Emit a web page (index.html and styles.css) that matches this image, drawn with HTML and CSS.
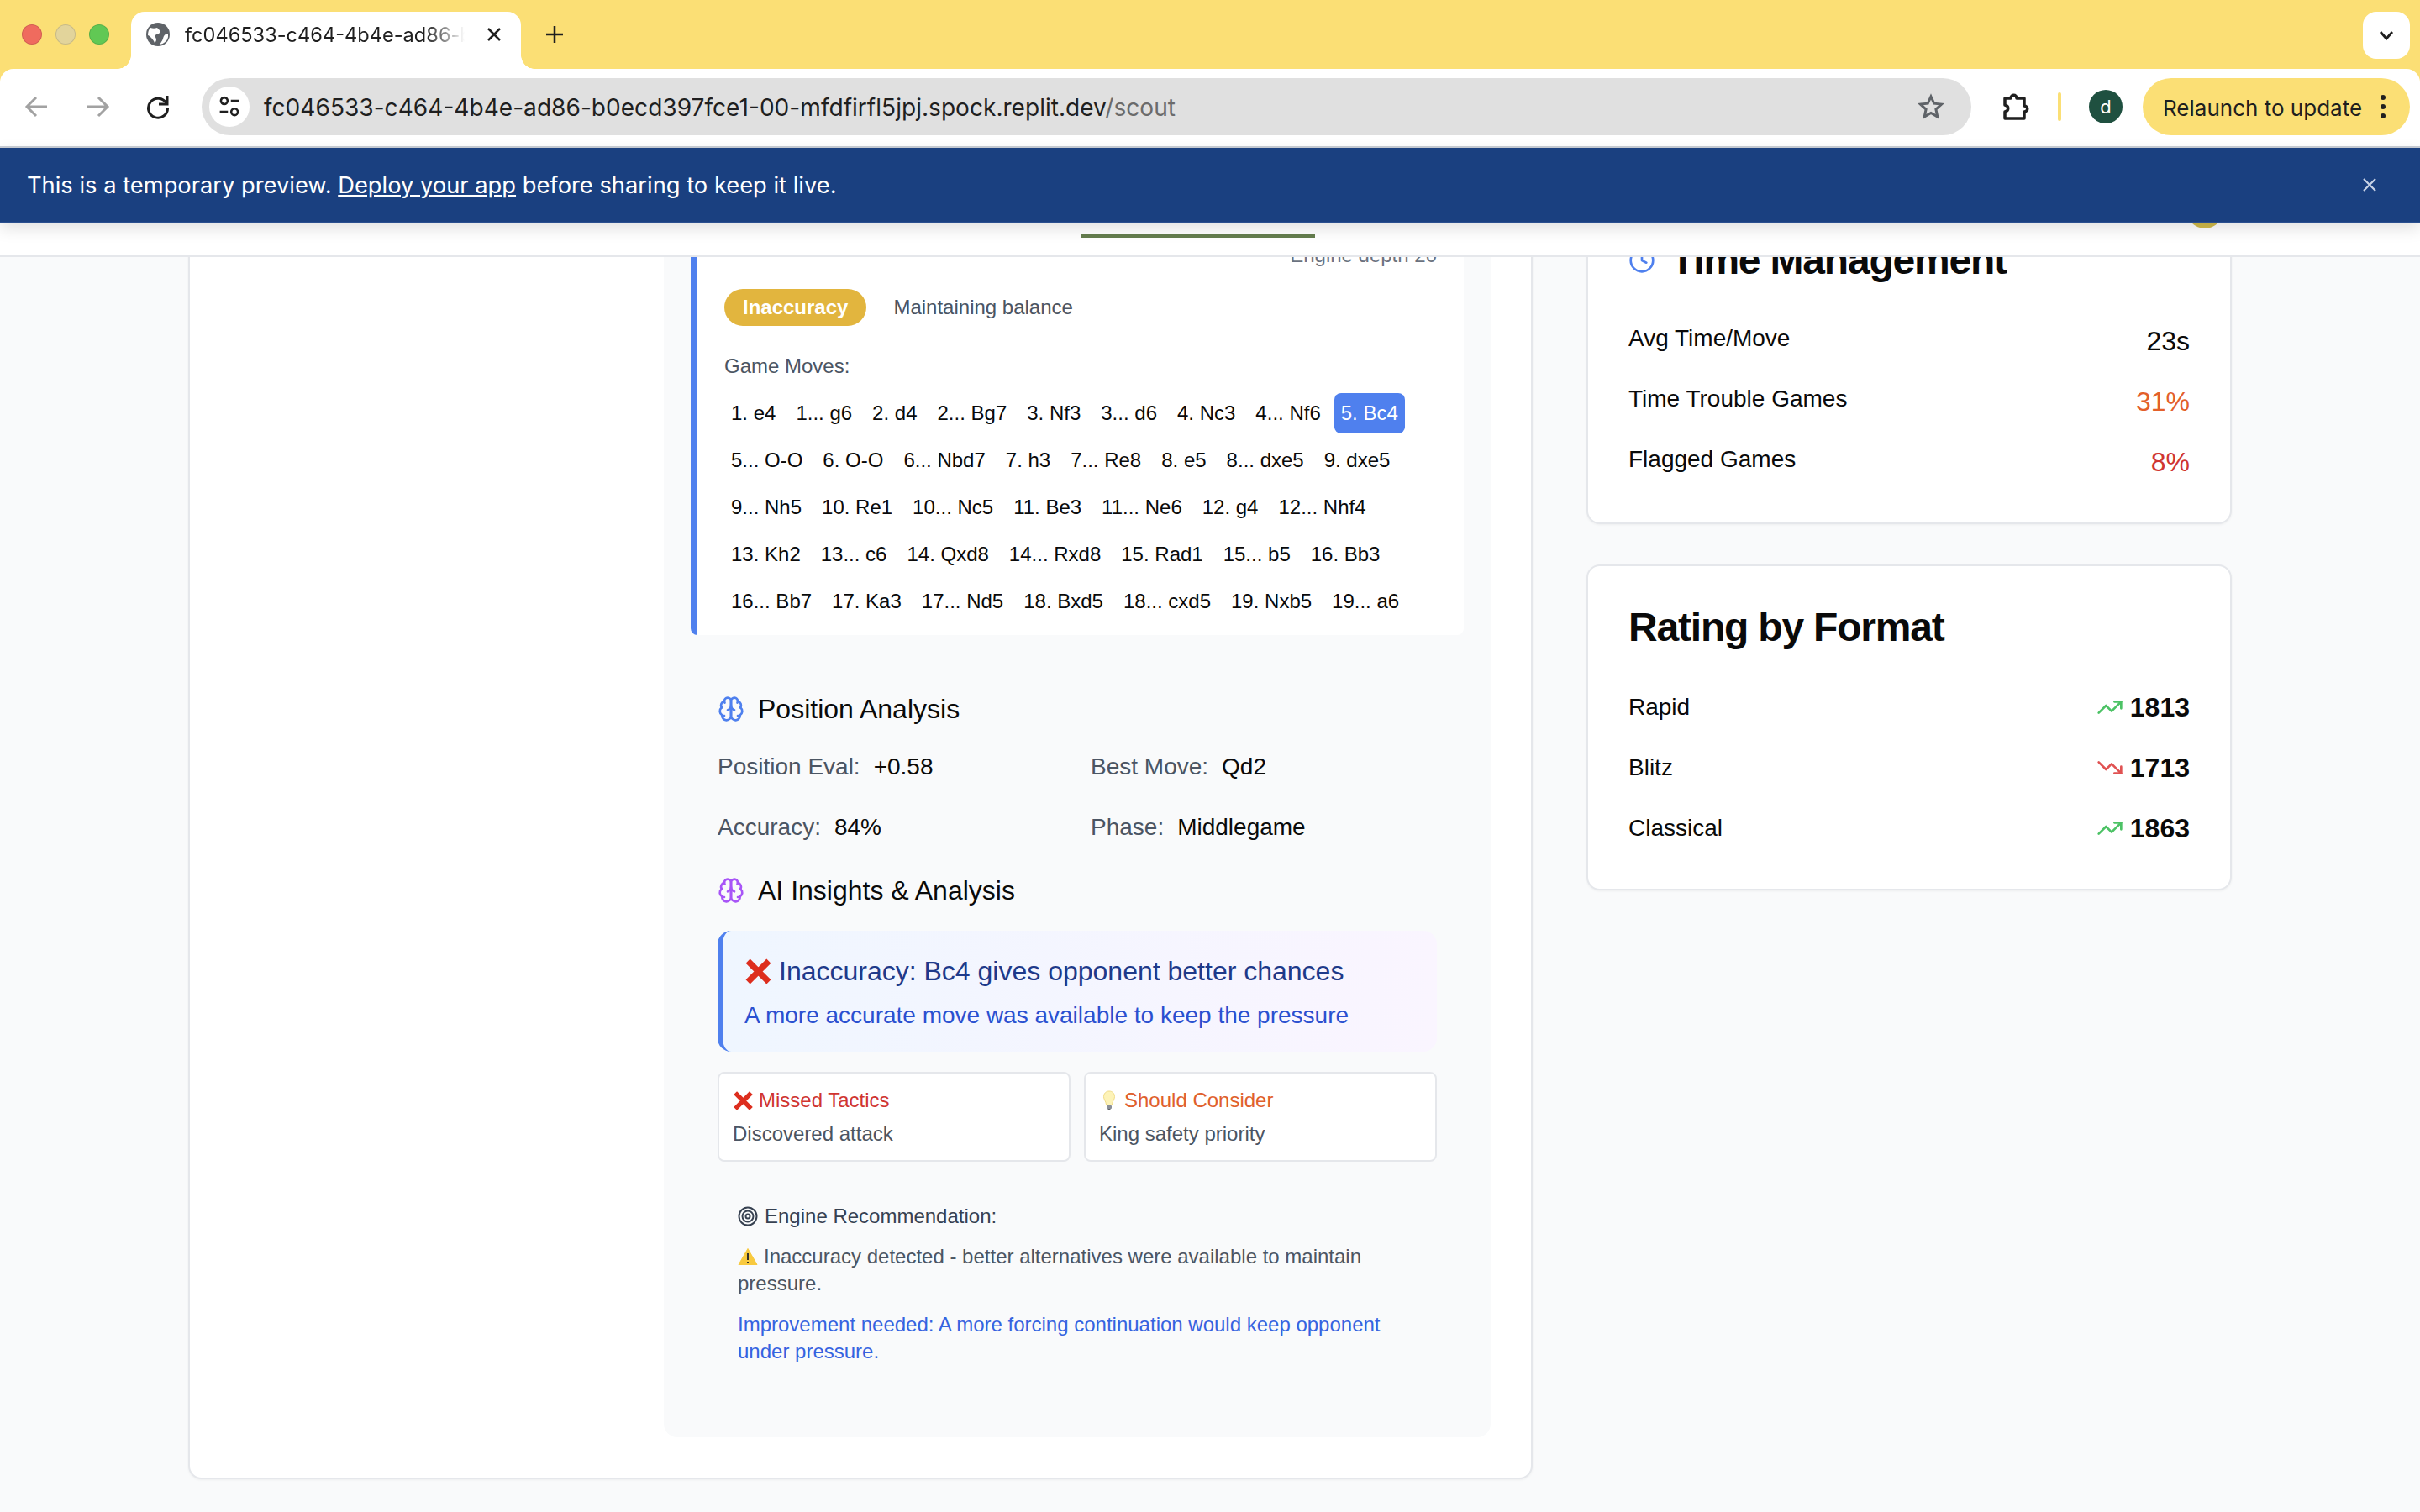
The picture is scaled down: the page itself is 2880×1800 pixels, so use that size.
FILE: index.html
```html
<!DOCTYPE html>
<html lang="en">
<head>
<meta charset="UTF-8" />
<meta name="viewport" content="width=device-width, initial-scale=1" />
<title>Scout</title>
<link rel="stylesheet" href="styles.css">
</head>
<body>
<svg class="defs" width="0" height="0" aria-hidden="true">
  <symbol id="brain" viewBox="0 0 24 24">
    <path d="M12 5a3 3 0 1 0-5.997.125 4 4 0 0 0-2.526 5.77 4 4 0 0 0 .556 6.588A4 4 0 1 0 12 18Z"/>
    <path d="M12 5a3 3 0 1 1 5.997.125 4 4 0 0 1 2.526 5.77 4 4 0 0 1-.556 6.588A4 4 0 1 1 12 18Z"/>
    <path d="M15 13a4.5 4.5 0 0 1-3-4 4.5 4.5 0 0 1-3 4"/>
    <path d="M17.599 6.5a3 3 0 0 0 .399-1.375"/>
    <path d="M6.003 5.125A3 3 0 0 0 6.401 6.5"/>
    <path d="M3.477 10.896a4 4 0 0 1 .585-.396"/>
    <path d="M19.938 10.5a4 4 0 0 1 .585.396"/>
    <path d="M6 18a4 4 0 0 1-1.967-.516"/>
    <path d="M19.967 17.484A4 4 0 0 1 18 18"/>
  </symbol>
  <symbol id="cross" viewBox="0 0 32 32">
    <path d="M4 4 28 28M28 4 4 28"/>
  </symbol>
  <symbol id="up" viewBox="0 0 24 24">
    <polyline points="22 7 13.5 15.5 8.5 10.5 2 17"/>
    <polyline points="16 7 22 7 22 13"/>
  </symbol>
  <symbol id="down" viewBox="0 0 24 24">
    <polyline points="22 17 13.5 8.5 8.5 13.5 2 7"/>
    <polyline points="16 17 22 17 22 11"/>
  </symbol>
</svg>

<div class="browser">
  <div class="tabstrip">
    <div class="lights">
      <span class="light light-red"></span>
      <span class="light light-idle"></span>
      <span class="light light-green"></span>
    </div>
    <div class="tab">
      <svg class="globe" viewBox="0 0 28 28">
        <circle cx="14" cy="14" r="14" fill="#5f6368"/>
        <path d="M5 6c3 1 5 1 8 0 2 2 4 3 3 6-1 2-4 1-5 3-1 2 1 3 1 5 0 2-1 3-2 4-1-3-3-5-5-7-1-1-2-2-3-2 0-4 1-7 3-9Z" fill="#fff"/>
        <path d="M26 13c-2 0-4 1-5 3-1 2-1 4-3 7l-2 3c5-1 9-4 10-9 0-1 0-3 0-4Z" fill="#fff"/>
      </svg>
      <span class="tab-title">fc046533-c464-4b4e-ad86-b0ecd397fce1</span>
      <svg class="tab-close" viewBox="0 0 20 20"><path d="M3 3 17 17M17 3 3 17"/></svg>
    </div>
    <svg class="new-tab" viewBox="0 0 24 24"><path d="M12 2V22M2 12H22"/></svg>
    <div class="tab-menu">
      <svg viewBox="0 0 20 20"><path d="M3 6 10 14 17 6"/></svg>
    </div>
  </div>

  <div class="toolbar">
    <svg class="nav-icon nav-off" viewBox="0 0 32 32"><path d="M28 16H5M15 5 4 16 15 27"/></svg>
    <svg class="nav-icon nav-off" viewBox="0 0 32 32"><path d="M4 16H27M17 5 28 16 17 27"/></svg>
    <svg class="nav-icon" viewBox="0 0 32 32"><path d="M26 12A11.5 11.5 0 1 0 27.500 17"/><path d="M27 3V13H17" /></svg>
    <div class="omnibox">
      <span class="site-icon">
        <svg viewBox="0 0 32 32"><circle cx="9" cy="8" r="4.500"/><path d="M18 8H29M3 23H14"/><circle cx="23" cy="23" r="4.500"/></svg>
      </span>
      <span class="url">fc046533-c464-4b4e-ad86-b0ecd397fce1-00-mfdfirfl5jpj.spock.replit.dev<span class="url-path">/scout</span></span>
      <svg class="star" viewBox="0 0 32 32"><path d="M16 4l3.700 8.200 8.900.9-6.700 6 1.900 8.800-7.800-4.500-7.800 4.500 1.900-8.800-6.700-6 8.900-.9Z"/></svg>
    </div>
    <svg class="puzzle" viewBox="0 0 36 36"><path d="M5 8h7c0-5 7-5 7 0h9v9c5 0 5 7 0 7v8H5v-8c5-1 5-7 0-8Z"/></svg>
    <span class="toolbar-sep"></span>
    <span class="profile">d</span>
    <div class="relaunch">
      <span class="relaunch-text">Relaunch to update</span>
      <span class="kebab"><i></i><i></i><i></i></span>
    </div>
  </div>

  <div class="banner">
    <span>This is a temporary preview. <a href="#">Deploy your app</a> before sharing to keep it live.</span>
    <svg class="banner-close" viewBox="0 0 20 20"><path d="M3 3 17 17M17 3 3 17"/></svg>
  </div>
</div>

<div class="site-header">
  <span class="nav-underline"></span>
  <span class="user-dot"></span>
</div>

<div class="scroller">
  <main class="main-card">
    <div class="side-space"></div>
    <section class="panel">
      <div class="move-card">
        <div class="depth">Engine depth 20</div>
        <div class="verdict">
          <span class="badge">Inaccuracy</span>
          <span class="verdict-note">Maintaining balance</span>
        </div>
        <div class="moves-label">Game Moves:</div>
        <div class="moves">
          <span class="move">1. e4</span><span class="move">1... g6</span><span class="move">2. d4</span><span class="move">2... Bg7</span><span class="move">3. Nf3</span><span class="move">3... d6</span><span class="move">4. Nc3</span><span class="move">4... Nf6</span><span class="move current">5. Bc4</span>
          <span class="move">5... O-O</span><span class="move">6. O-O</span><span class="move">6... Nbd7</span><span class="move">7. h3</span><span class="move">7... Re8</span><span class="move">8. e5</span><span class="move">8... dxe5</span><span class="move">9. dxe5</span>
          <span class="move">9... Nh5</span><span class="move">10. Re1</span><span class="move">10... Nc5</span><span class="move">11. Be3</span><span class="move">11... Ne6</span><span class="move">12. g4</span><span class="move">12... Nhf4</span>
          <span class="move">13. Kh2</span><span class="move">13... c6</span><span class="move">14. Qxd8</span><span class="move">14... Rxd8</span><span class="move">15. Rad1</span><span class="move">15... b5</span><span class="move">16. Bb3</span>
          <span class="move">16... Bb7</span><span class="move">17. Ka3</span><span class="move">17... Nd5</span><span class="move">18. Bxd5</span><span class="move">18... cxd5</span><span class="move">19. Nxb5</span><span class="move">19... a6</span>
        </div>
      </div>

      <div class="analysis">
        <h3 class="section-title">
          <svg class="lucide brain-blue"><use href="#brain"/></svg>
          Position Analysis
        </h3>
        <div class="facts">
          <div class="fact"><span class="fact-label">Position Eval:</span><span>+0.58</span></div>
          <div class="fact"><span class="fact-label">Best Move:</span><span>Qd2</span></div>
          <div class="fact"><span class="fact-label">Accuracy:</span><span>84%</span></div>
          <div class="fact"><span class="fact-label">Phase:</span><span>Middlegame</span></div>
        </div>

        <h3 class="section-title">
          <svg class="lucide brain-purple"><use href="#brain"/></svg>
          AI Insights &amp; Analysis
        </h3>
        <div class="insight">
          <div class="insight-head">
            <svg class="cross cross-big"><use href="#cross"/></svg>
            Inaccuracy: Bc4 gives opponent better chances
          </div>
          <div class="insight-sub">A more accurate move was available to keep the pressure</div>
        </div>

        <div class="tips">
          <div class="tip">
            <div class="tip-title tip-red">
              <svg class="cross cross-small"><use href="#cross"/></svg>
              Missed Tactics
            </div>
            <div class="tip-text">Discovered attack</div>
          </div>
          <div class="tip">
            <div class="tip-title tip-orange">
              <svg class="bulb" viewBox="0 0 16 24">
                <path d="M8 1C4 1 1.500 4 1.500 7.500c0 3.500 2.500 5 3.200 10h6.600c.7-5 3.200-6.500 3.200-10C14.500 4 12 1 8 1Z" fill="#fdf3b8" stroke="#f1dc86"/>
                <rect x="5" y="18" width="6" height="4" rx="1" fill="#8a8f98"/>
                <rect x="6.500" y="22" width="3" height="1.500" fill="#5f6368"/>
              </svg>
              Should Consider
            </div>
            <div class="tip-text">King safety priority</div>
          </div>
        </div>

        <div class="engine">
          <div class="engine-title">
            <svg class="target" viewBox="0 0 24 24"><circle cx="12" cy="12" r="10.500"/><circle cx="12" cy="12" r="6.500"/><circle cx="12" cy="12" r="2.500"/></svg>
            Engine Recommendation:
          </div>
          <p class="engine-text">
            <svg class="warn" viewBox="0 0 24 22">
              <path d="M12 1.500 23 20.500H1Z" fill="#f8c93e" stroke="#f8c93e" stroke-linejoin="round"/>
              <path d="M12 7V15M12 17V19" stroke="#33302a" stroke-width="2" fill="none"/>
            </svg>Inaccuracy detected - better alternatives were available to maintain pressure.
          </p>
          <p class="engine-text engine-blue">Improvement needed: A more forcing continuation would keep opponent under pressure.</p>
        </div>
      </div>
    </section>
  </main>

  <aside class="side">
    <section class="stat-card">
      <h2 class="stat-title">
        <svg class="lucide brain-blue"><circle cx="16" cy="16" r="13.300"/><polyline points="16 8 16 16 21.300 18.700"/></svg>
        Time Management
      </h2>
      <div class="stat-rows">
        <div class="stat-row"><span class="stat-label">Avg Time/Move</span><span class="stat-value">23s</span></div>
        <div class="stat-row"><span class="stat-label">Time Trouble Games</span><span class="stat-value val-orange">31%</span></div>
        <div class="stat-row"><span class="stat-label">Flagged Games</span><span class="stat-value val-red">8%</span></div>
      </div>
    </section>

    <section class="stat-card">
      <h2 class="stat-title">Rating by Format</h2>
      <div class="rating-rows">
        <div class="rating-row"><span class="stat-label">Rapid</span><span class="rating"><svg class="trend trend-up"><use href="#up"/></svg>1813</span></div>
        <div class="rating-row"><span class="stat-label">Blitz</span><span class="rating"><svg class="trend trend-down"><use href="#down"/></svg>1713</span></div>
        <div class="rating-row"><span class="stat-label">Classical</span><span class="rating"><svg class="trend trend-up"><use href="#up"/></svg>1863</span></div>
      </div>
    </section>
  </aside>
</div>
</body>
</html>
```

FILE: styles.css
```css
* {
  box-sizing: border-box;
}
html, body {
  height: 100%;
}
body {
  margin: 0;
  display: flex;
  flex-direction: column;
  overflow: hidden;
  background: #f9fafb;
  color: #0a0a0a;
  font-family: "Liberation Sans", Arial, sans-serif;
}
.defs {
  display: block;
  height: 0;
}

/* browser chrome */
.browser {
  position: relative;
  z-index: 2;
  background: #fbdf75;
  font-family: Inter, "Liberation Sans", sans-serif;
}
.tabstrip {
  display: flex;
  height: 82px;
  padding: 14px 12px 0 26px;
}
.lights {
  display: flex;
  gap: 16px;
  height: 54px;
  align-items: center;
}
.light {
  width: 24px;
  height: 24px;
  border-radius: 50%;
  border: 1px solid rgba(0,0,0,0.12);
}
.light-red { background: #ef6b5e; }
.light-idle { background: #e2d49b; }
.light-green { background: #61c854; }
.tab {
  position: relative;
  display: flex;
  align-items: center;
  width: 464px;
  height: 68px;
  margin-left: 26px;
  padding: 0 22px 14px 18px;
  background: #fff;
  border-radius: 16px 16px 0 0;
}
.tab::before,
.tab::after {
  content: "";
  position: absolute;
  bottom: 0;
  width: 16px;
  height: 16px;
}
.tab::before {
  left: -16px;
  background: radial-gradient(circle at 0 0, transparent 15.500px, #fff 16px);
}
.tab::after {
  right: -16px;
  background: radial-gradient(circle at 100% 0, transparent 15.500px, #fff 16px);
}
.globe {
  flex: none;
  width: 28px;
  height: 28px;
}
.tab-title {
  width: 333px;
  margin-left: 18px;
  overflow: hidden;
  white-space: nowrap;
  font-size: 23.600px;
  color: #1f1f1f;
  -webkit-mask-image: linear-gradient(to right, #000 86%, transparent 100%);
  mask-image: linear-gradient(to right, #000 86%, transparent 100%);
}
.tab-close {
  flex: none;
  width: 20px;
  height: 20px;
  margin-left: auto;
  fill: none;
  stroke: #1f1f1f;
  stroke-width: 2.500;
}
.new-tab {
  width: 24px;
  height: 24px;
  margin: 15px 0 0 28px;
  fill: none;
  stroke: #1f1f1f;
  stroke-width: 2.500;
}
.tab-menu {
  display: flex;
  align-items: center;
  justify-content: center;
  width: 56px;
  height: 56px;
  margin-left: auto;
  background: #fff;
  border-radius: 16px;
}
.tab-menu svg {
  width: 20px;
  height: 20px;
  fill: none;
  stroke: #1f1f1f;
  stroke-width: 2.800;
}
.toolbar {
  display: flex;
  align-items: center;
  height: 94px;
  padding: 0 12px 2px 28px;
  background: #fff;
  border-bottom: 2px solid #c9ced6;
  border-radius: 16px 16px 0 0;
}
.nav-icon {
  flex: none;
  width: 32px;
  height: 32px;
  margin-right: 40px;
  fill: none;
  stroke: #1f1f1f;
  stroke-width: 3;
}
.nav-off {
  stroke: #a2a2a2;
}
.nav-icon:nth-child(3) {
  margin-right: 36px;
}
.omnibox {
  display: flex;
  align-items: center;
  flex: 1;
  height: 68px;
  padding: 0 32px 0 9px;
  background: #e0e0e0;
  border-radius: 34px;
}
.site-icon {
  display: flex;
  align-items: center;
  justify-content: center;
  width: 48px;
  height: 48px;
  background: #fff;
  border-radius: 50%;
}
.site-icon svg {
  width: 28px;
  height: 28px;
  fill: none;
  stroke: #1f1f1f;
  stroke-width: 3;
}
.url {
  margin-left: 17px;
  padding-top: 2px;
  font-size: 28.100px;
  color: #1f1f1f;
  white-space: nowrap;
}
.url-path {
  color: #6b6b6b;
}
.star {
  width: 32px;
  height: 32px;
  margin-left: auto;
  fill: none;
  stroke: #5f6368;
  stroke-width: 3;
  stroke-linejoin: miter;
}
.puzzle {
  flex: none;
  width: 36px;
  height: 36px;
  margin-left: 35px;
  fill: none;
  stroke: #1f1f1f;
  stroke-width: 3.500;
  stroke-linejoin: round;
}
.toolbar-sep {
  width: 4px;
  height: 34px;
  margin-left: 32px;
  background: #fbdf75;
  border-radius: 2px;
}
.profile {
  display: flex;
  align-items: center;
  justify-content: center;
  width: 40px;
  height: 40px;
  margin-left: 33px;
  background: #1f5040;
  border-radius: 50%;
  color: #fff;
  font-size: 22px;
}
.relaunch {
  display: flex;
  align-items: center;
  justify-content: space-between;
  width: 318px;
  height: 68px;
  margin-left: 24px;
  padding: 0 29px 0 24px;
  background: #fbdf75;
  border-radius: 34px;
  font-size: 26px;
  color: #1f1f1f;
}
.relaunch-text {
  padding-top: 2px;
}
.kebab {
  display: flex;
  flex-direction: column;
  gap: 5px;
}
.kebab i {
  width: 6px;
  height: 6px;
  background: #1f1f1f;
  border-radius: 50%;
}
.banner {
  display: flex;
  align-items: center;
  justify-content: space-between;
  height: 90px;
  padding: 0 50px 0 32px;
  background: #1a4080;
  border-bottom: 2px solid #2a4f8f;
  box-shadow: 0 6px 18px rgba(0,0,0,0.12);
  color: #fff;
  font-size: 27.300px;
}
.banner a {
  color: #fff;
}
.banner-close {
  width: 20px;
  height: 20px;
  fill: none;
  stroke: #c9d3e6;
  stroke-width: 2.200;
}

/* app header, mostly hidden behind the banner */
.site-header {
  flex: none;
  display: flex;
  height: 40px;
  background: #fff;
  border-bottom: 2px solid #e5e7eb;
}
.nav-underline {
  width: 279px;
  height: 4px;
  margin: 13px 0 0 1286px;
  background: #647d4e;
}
.user-dot {
  width: 44px;
  height: 44px;
  margin: -38px 234px 0 auto;
  background: #d1bb4a;
  border-radius: 50%;
}

/* page */
.scroller {
  flex: 1;
  display: flex;
  align-items: flex-start;
  gap: 64px;
  padding-left: 224px;
  overflow: hidden;
}
.main-card {
  display: flex;
  flex: none;
  width: 1600px;
  margin-top: -85px;
  padding: 0 48px 48px;
  background: #fff;
  border: 2px solid #e5e7eb;
  border-radius: 16px;
  box-shadow: 0 1px 3px rgba(0,0,0,0.05);
}
.side-space {
  flex: 1;
}
.panel {
  width: 984px;
  padding: 32px 32px 48px;
  background: #f9fafb;
  border-radius: 16px;
}
.move-card {
  padding: 33px 32px 16px;
  background: #fff;
  border-left: 8px solid #4f80ee;
  border-radius: 8px;
}
.depth {
  font-size: 24px;
  line-height: 32px;
  color: #6b7280;
  text-align: right;
}
.verdict {
  display: flex;
  align-items: center;
  gap: 32px;
  margin-top: 24px;
}
.badge {
  display: flex;
  align-items: center;
  height: 44px;
  padding: 0 22px;
  background: #e2b53e;
  border-radius: 22px;
  color: #fff;
  font-size: 24px;
  font-weight: 700;
}
.verdict-note,
.moves-label {
  font-size: 24px;
  line-height: 32px;
  color: #4b5563;
}
.moves-label {
  margin-top: 32px;
}
.moves {
  display: flex;
  flex-wrap: wrap;
  gap: 8px;
  margin-top: 16px;
}
.move {
  height: 48px;
  padding: 0 8px;
  border-radius: 8px;
  font-size: 24px;
  line-height: 48px;
  white-space: nowrap;
}
.move.current {
  background: #4f80ee;
  color: #fff;
}
.analysis {
  margin-top: 68px;
  padding: 0 32px;
}
.section-title {
  display: flex;
  align-items: center;
  gap: 16px;
  margin: 0;
  font-size: 32px;
  font-weight: 400;
  line-height: 40px;
}
.lucide {
  flex: none;
  width: 32px;
  height: 32px;
  fill: none;
  stroke-width: 2.670;
  stroke-linecap: round;
  stroke-linejoin: round;
}
.lucide use {
  stroke-width: 2;
}
.brain-blue { stroke: #4f80ee; }
.brain-purple { stroke: #a855f7; }
.facts {
  display: grid;
  grid-template-columns: 1fr 1fr;
  gap: 32px;
  margin: 29px 0 35px;
}
.fact {
  display: flex;
  gap: 16px;
  font-size: 28px;
  line-height: 40px;
}
.fact-label {
  color: #4b5563;
}
.insight {
  height: 144px;
  margin-top: 28px;
  padding: 28px 32px 23px 26px;
  background: linear-gradient(to right, #eff6ff, #faf5ff);
  border-left: 6px solid #4f80ee;
  border-radius: 16px;
}
.insight-head {
  display: flex;
  align-items: center;
  gap: 8px;
  font-size: 32px;
  line-height: 40px;
  color: #1e3a8a;
}
.insight-sub {
  margin-top: 13px;
  font-size: 28px;
  line-height: 40px;
  color: #2a50d0;
}
.cross {
  flex: none;
  fill: none;
  stroke: #dd2e1e;
  stroke-width: 7;
}
.cross-big {
  width: 33px;
  height: 33px;
}
.cross-small {
  width: 25px;
  height: 25px;
}
.tips {
  display: grid;
  grid-template-columns: 1fr 1fr;
  gap: 16px;
  margin-top: 24px;
}
.tip {
  padding: 16px 16px 15px;
  background: #fff;
  border: 2px solid #e5e7eb;
  border-radius: 8px;
}
.tip-title {
  display: flex;
  align-items: center;
  gap: 6px;
  font-size: 24px;
  line-height: 32px;
}
.tip-red { color: #d03530; }
.tip-orange { color: #e0602c; }
.tip-text {
  margin-top: 8px;
  font-size: 24px;
  line-height: 32px;
  color: #4b5563;
}
.bulb {
  flex: none;
  width: 16px;
  height: 24px;
  margin: 0 4px 0 4px;
}
.engine {
  padding: 49px 24px 38px;
  font-size: 24px;
  line-height: 32px;
}
.engine-title {
  display: flex;
  align-items: center;
  gap: 8px;
  color: #374151;
}
.target {
  flex: none;
  width: 24px;
  height: 24px;
  fill: none;
  stroke: #374151;
  stroke-width: 2;
}
.engine-text {
  margin: 16px 0 0;
  color: #4b5563;
}
.engine-blue {
  margin-top: 17px;
  color: #3563e0;
}
.warn {
  width: 24px;
  height: 22px;
  margin-right: 7px;
  vertical-align: -3px;
}

/* right column */
.side {
  display: flex;
  flex: none;
  flex-direction: column;
  gap: 48px;
  width: 768px;
  margin-top: -71px;
}
.stat-card {
  padding: 45px 48px 51px;
  background: #fff;
  border: 2px solid #e5e7eb;
  border-radius: 16px;
  box-shadow: 0 1px 3px rgba(0,0,0,0.05);
}
.stat-title {
  display: flex;
  align-items: center;
  gap: 18px;
  margin: 0;
  font-size: 48px;
  font-weight: 700;
  letter-spacing: -1.200px;
  line-height: 56px;
}
.stat-rows {
  display: flex;
  flex-direction: column;
  gap: 30px;
  margin-top: 47px;
}
.stat-row {
  display: flex;
  align-items: flex-start;
  justify-content: space-between;
  height: 42px;
}
.stat-label {
  font-size: 28px;
  line-height: 36px;
}
.stat-value {
  font-size: 32px;
  line-height: 42px;
}
.val-orange { color: #e3602a; }
.val-red { color: #d03530; }
.rating-rows {
  display: flex;
  flex-direction: column;
  gap: 32px;
  margin-top: 47px;
  padding-bottom: 1px;
}
.rating-row {
  display: flex;
  align-items: center;
  justify-content: space-between;
  height: 40px;
}
.rating {
  display: flex;
  align-items: center;
  gap: 8px;
  font-size: 32px;
  font-weight: 700;
}
.trend {
  width: 32px;
  height: 32px;
  fill: none;
  stroke-width: 2;
  stroke-linecap: round;
  stroke-linejoin: round;
}
.trend-up { stroke: #4cc265; }
.trend-down { stroke: #e05252; }
```
